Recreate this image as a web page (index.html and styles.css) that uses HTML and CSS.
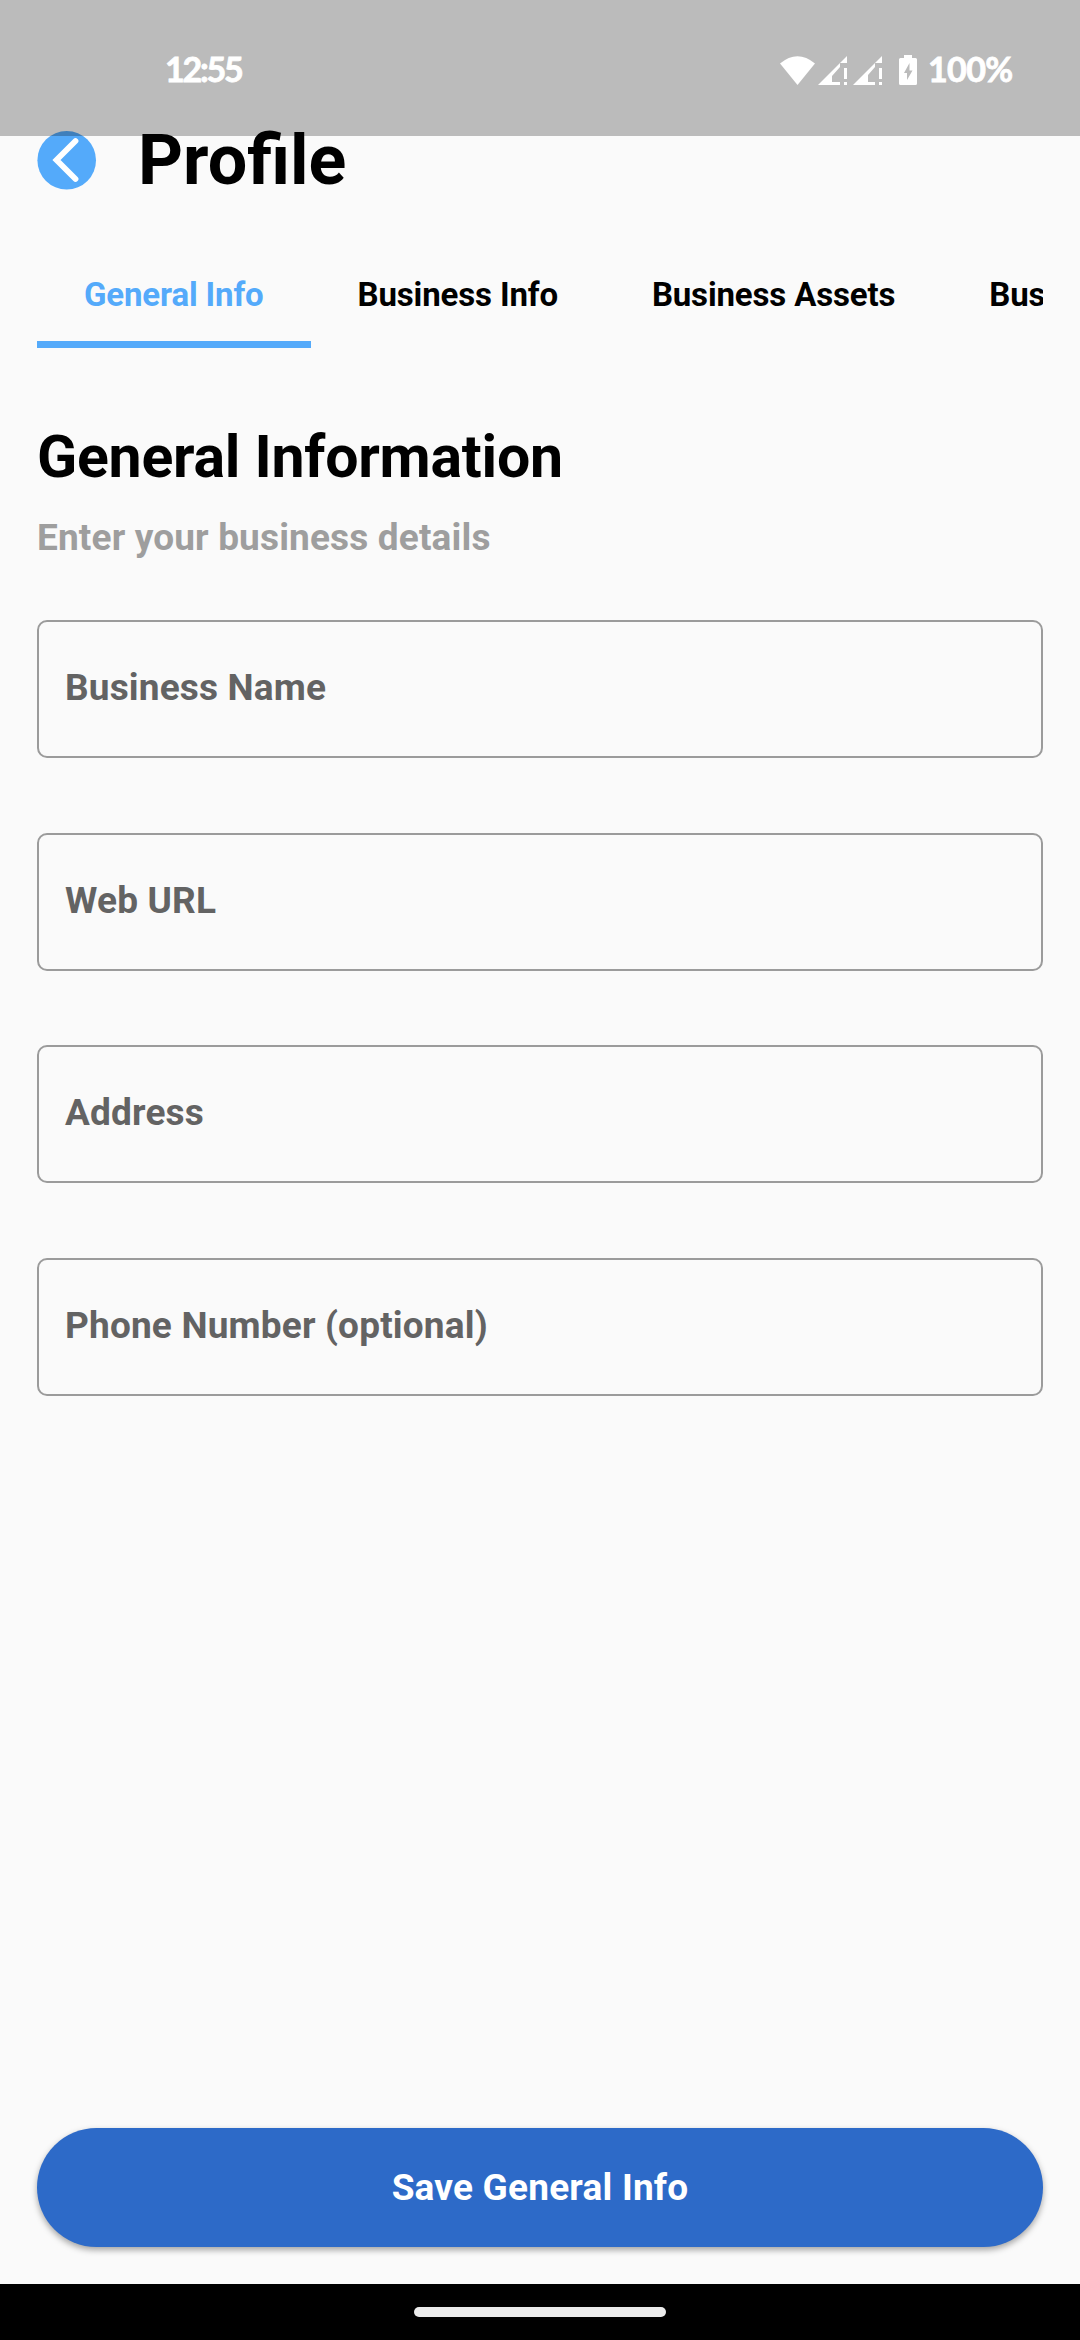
FILE: index.html
```html
<!DOCTYPE html>
<html lang="en">
<head>
<meta charset="utf-8">
<title>Profile</title>
<link rel="stylesheet" href="styles.css">
</head>
<body>
<div class="screen">
  <div class="statusbar">
    <span class="clock">12:55</span>
    <div class="status-icons">
      <svg class="wifi" viewBox="0 0 35 29"><path d="M0 7.500Q17.500-7 35 7.500L17.500 29Z"/></svg>
      <svg class="signal" viewBox="0 0 29 29"><path d="M29 0V7H22V11L14 20V26H22V29H0ZM26 12h3v11h-3ZM26 26h3v3h-3Z"/></svg>
      <svg class="signal signal-two" viewBox="0 0 29 29"><path d="M29 0V7H22V11L15 19V26H22V29H0ZM26 12h3v11h-3ZM26 26h3v3h-3Z"/></svg>
      <svg class="battery" viewBox="0 0 18 30"><path fill-rule="evenodd" d="M5 0h8v3h3.500a1.500 1.500 0 0 1 1.500 1.500V28.500a1.500 1.500 0 0 1-1.500 1.500H1.500A1.500 1.500 0 0 1 0 28.500V4.500A1.500 1.500 0 0 1 1.500 3H5ZM10.500 8L5 18H8V25L13.500 15.500H10.500Z"/></svg>
      <span class="percent">100%</span>
    </div>
  </div>
  <header class="header">
    <svg class="back" viewBox="0 0 60 60"><circle cx="29.700" cy="30.200" r="29.300" fill="#54aafa"/><path d="M38.500 11L19.500 30L38.500 49" fill="none" stroke="#fff" stroke-width="5.800" stroke-linecap="round"/></svg>
    <h1 class="title">Profile</h1>
  </header>
  <nav class="tabs">
    <span class="tab active">General Info</span>
    <span class="tab">Business Info</span>
    <span class="tab">Business Assets</span>
    <span class="tab">Business Documents</span>
  </nav>
  <main class="content">
    <h2 class="heading">General Information</h2>
    <p class="subtitle">Enter your business details</p>
    <div class="fields">
      <div class="field">Business Name</div>
      <div class="field">Web URL</div>
      <div class="field">Address</div>
      <div class="field">Phone Number (optional)</div>
    </div>
    <button class="save">Save General Info</button>
  </main>
  <footer class="navbar"><div class="handle"></div></footer>
</div>
</body>
</html>
```
FILE: styles.css
```css
* { box-sizing: border-box; }
body { margin: 0; background: #fafafa; font-family: Roboto, sans-serif; font-weight: 700; color: #000; }
h1, h2, p { margin: 0; font-weight: inherit; }
.screen { position: relative; width: 1080px; height: 2340px; overflow: hidden; display: flex; flex-direction: column; padding-top: 130px; }
.statusbar { position: absolute; inset: 0 0 auto 0; height: 136px; padding: 0 69px 0 165px; background: rgba(0,0,0,.25); display: flex; justify-content: space-between; align-items: flex-start; color: #fff; font-family: Lato, sans-serif; font-weight: 700; font-size: 34px; line-height: 40px; padding-top: 49px; -webkit-text-stroke: .8px #fff; }
.clock { letter-spacing: -2.200px; }
.status-icons { display: flex; align-items: flex-start; }
.status-icons svg { fill: #fff; display: block; flex: none; }
.wifi { width: 35px; height: 29px; margin: 7px 3px 0 0; }
.signal { width: 29px; height: 29px; margin: 7px 6px 0 0; }
.signal-two { margin-right: 17px; }
.battery { width: 18px; height: 30px; margin: 6px 11px 0 0; }
.percent { width: 83px; white-space: nowrap; letter-spacing: -.600px; }
.header { height: 60px; padding-left: 37px; display: flex; align-items: center; }
.back { width: 60px; height: 60px; flex: none; }
.title { margin-left: 41px; font-size: 70px; line-height: 82px; }
.tabs { margin: 56px 37px 0; height: 102px; flex: none; display: flex; overflow: hidden; font-size: 33px; line-height: 39px; letter-spacing: -.150px; }
.tab { flex: none; padding: 29px 47px 0; white-space: nowrap; }
.active { color: #54aafa; border-bottom: 7px solid #54aafa; }
.content { flex: 1; padding: 74px 37px 37px; display: flex; flex-direction: column; }
.heading { font-size: 59px; line-height: 70px; letter-spacing: -.250px; }
.subtitle { margin-top: 24px; font-size: 37px; line-height: 44px; letter-spacing: .150px; color: #9e9e9e; }
.fields { margin-top: 60px; display: grid; gap: 74.600px; }
.field { height: 138px; border: 2.500px solid #9b9b9b; border-radius: 10px; padding-left: 26px; font-size: 37px; line-height: 132px; letter-spacing: .170px; color: #636363; }
.save { margin-top: auto; height: 119.500px; border: 0; border-radius: 60px; background: #2d6ac8; color: #fff; font: 700 37px Roboto, sans-serif; letter-spacing: .200px; box-shadow: 0 3px 6px rgba(0,0,0,.35); }
.navbar { height: 56px; flex: none; background: #000; display: flex; justify-content: center; padding-top: 23px; }
.handle { width: 252px; height: 10px; border-radius: 5px; background: #ececec; }
```
